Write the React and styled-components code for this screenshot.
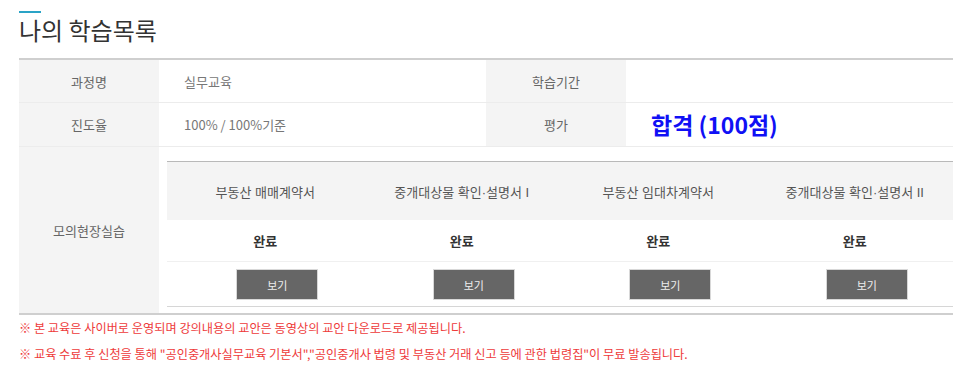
import React from 'react';
import styled, {createGlobalStyle} from 'styled-components';

const FONT = `"Noto Sans CJK KR", "Noto Sans", sans-serif`;
const HEAD_FONT = `"Liberation Sans", "Noto Sans CJK KR", sans-serif`;

const GlobalStyle = createGlobalStyle`
  body {
    margin: 0;
    background: #fff;
    font-family: ${FONT};
  }
`;

const practices = [
  {name: '부동산 매매계약서', status: '완료'},
  {name: '중개대상물 확인·설명서 I', status: '완료'},
  {name: '부동산 임대차계약서', status: '완료'},
  {name: '중개대상물 확인·설명서 II', status: '완료'},
];

const App = () => {
  return <Page>
    <GlobalStyle/>
    <TitleBlock>
      <Accent/>
      <Title>나의 학습목록</Title>
    </TitleBlock>

    <InfoTable>
      <tbody>
        <tr>
          <Label>과정명</Label>
          <Value>실무교육</Value>
          <Label>학습기간</Label>
          <Value></Value>
        </tr>
        <tr>
          <Label>진도율</Label>
          <Value>100% / 100%기준</Value>
          <Label>평가</Label>
          <Value><Grade>합격 (100점)</Grade></Value>
        </tr>
        <tr>
          <Label>모의현장실습</Label>
          <PracticeCell colSpan={3}>
            <PracticeTable>
              <tbody>
                <tr>
                  {practices.map(p => <PracticeHead key={p.name}>{p.name}</PracticeHead>)}
                </tr>
                <tr>
                  {practices.map(p => <StatusCell key={p.name}>{p.status}</StatusCell>)}
                </tr>
                <tr>
                  {practices.map(p => <ButtonCell key={p.name}><ViewButton>보기</ViewButton></ButtonCell>)}
                </tr>
              </tbody>
            </PracticeTable>
          </PracticeCell>
        </tr>
      </tbody>
    </InfoTable>

    <Notes>
      <Note>※ 본 교육은 사이버로 운영되며 강의내용의 교안은 동영상의 교안 다운로드로 제공됩니다.</Note>
      <Note>※ 교육 수료 후 신청을 통해 "공인중개사실무교육 기본서","공인중개사 법령 및 부동산 거래 신고 등에 관한 법령집"이 무료 발송됩니다.</Note>
    </Notes>
  </Page>
};

const Page = styled.div`
  width: 933px;
  padding: 11px 0 0 19px;
`

const TitleBlock = styled.div`
  display: flex;
  flex-direction: column;
  height: 47px;
`

const Accent = styled.div`
  width: 22px;
  height: 2px;
  background-color: #2aa3c6;
`

const Title = styled.h2`
  margin: 0;
  font-size: 24px;
  font-weight: 400;
  line-height: 34px;
  color: #333;
`

const InfoTable = styled.table`
  width: 933px;
  border-collapse: collapse;
  table-layout: fixed;
  border-top: 2px solid #cfcfcf;
  border-bottom: 2px solid #cfcfcf;

  td {
    border-bottom: 1px solid #ececec;
  }
  tr:last-child > td {
    border-bottom: none;
  }
`

const Label = styled.td`
  width: 140px;
  height: 42px;
  padding: 0;
  background-color: #f4f4f4;
  text-align: center;
  font-size: 13px;
  color: #666;
`

const Value = styled.td`
  width: 302px;
  padding: 0 0 0 25px;
  font-size: 13px;
  color: #777;
`

const Grade = styled.span`
  display: inline-block;
  font-size: 23px;
  font-weight: 700;
  line-height: 43px;
  color: #1010f5;
`

const PracticeCell = styled.td`
  padding: 14px 0 6px 8px;
`

const PracticeTable = styled.table`
  width: 100%;
  border-collapse: collapse;
  table-layout: fixed;
  border-top: 1px solid #b9b9b9;
`

const PracticeHead = styled.th`
  height: 58px;
  padding: 0;
  background-color: #f4f4f4;
  font-family: ${HEAD_FONT};
  font-size: 13px;
  font-weight: 400;
  color: #555;
  text-align: center;
`

const StatusCell = styled.td`
  height: 41px;
  padding: 0;
  text-align: center;
  font-size: 13px;
  font-weight: 700;
  color: #333;
  border-bottom: 1px solid #f0f0f0 !important;
`

const ButtonCell = styled.td`
  height: 31px;
  padding: 7px 0 6px 24px;
  text-align: center;
  vertical-align: top;
  border-bottom: 1px solid #d6d6d6 !important;
`

const ViewButton = styled.button`
  display: block;
  width: 82px;
  height: 31px;
  margin: 0 auto;
  border: 1px solid #d8d8d8;
  background-color: #666;
  color: #eee;
  font-family: ${FONT};
  font-size: 11px;
  cursor: pointer;
`

const Notes = styled.div`
  display: flex;
  flex-direction: column;
  gap: 8px;
  padding-top: 4px;
`

const Note = styled.p`
  margin: 0;
  font-size: 12.2px;
  line-height: 18px;
  color: #ee3a3a;
`

export default App;
